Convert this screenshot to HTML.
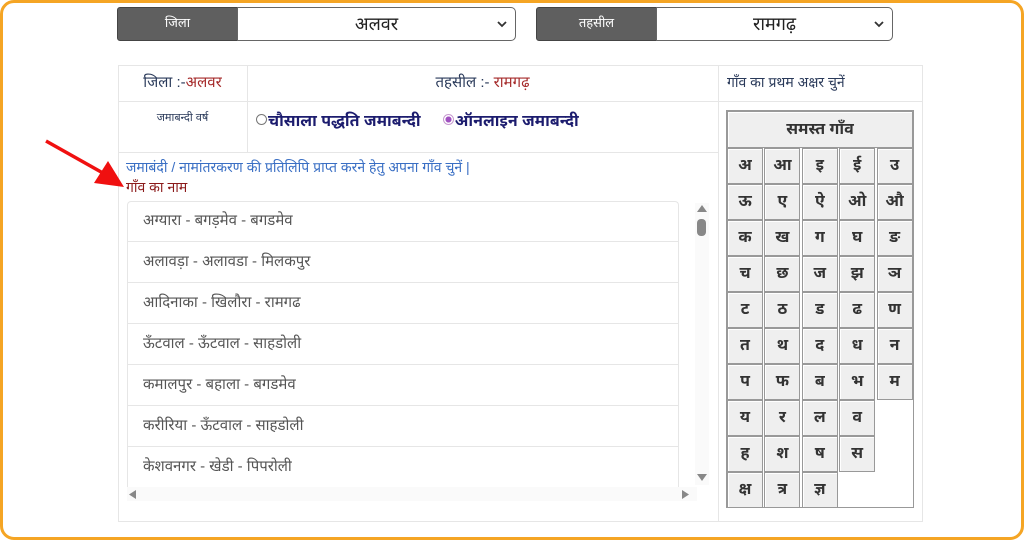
<!DOCTYPE html>
<html><head><meta charset="utf-8"><style>
*{margin:0;padding:0;box-sizing:border-box}
body{width:1024px;height:540px;background:#fff;font-family:"Liberation Sans","Noto Sans Devanagari","Lohit Devanagari",sans-serif;position:relative;overflow:hidden}
.frame{position:absolute;left:0;top:0;width:1024px;height:540px;border:3px solid #f5a524;border-radius:14px}
.abs{position:absolute}
.lab{background:#5f5f5f;color:#fff;font-size:13px;text-align:center;line-height:30px;border:1px solid #444;border-radius:3px 0 0 3px}
.sel{background:#fff;border:1px solid #666;border-radius:0 5px 5px 0;font-size:18px;text-align:center;line-height:32px;color:#222}
.sel svg{position:absolute;right:8px;top:13px}
.bd{border:1px solid #e6e6e6}
.c{color:#2a3a5a;font-size:14px;text-align:center}
.red{color:#a52a2a}
.item{position:absolute;left:127px;width:552px;height:41px;border-bottom:1px solid #e6e6e6;color:#555;font-size:15px;padding-left:16px;line-height:40px}
.cell{position:absolute;width:36px;height:36px;background:#efefef;border:1px solid #999;box-shadow:inset 1px 1px 0 #fff;font-size:16px;font-weight:bold;color:#333;text-align:center;line-height:34px}
.rad{display:inline-block;width:11px;height:11px;border-radius:50%;border:1px solid #777;vertical-align:1px;margin-right:1px}
</style></head><body>
<div class="frame"></div>
<div class="abs lab" style="left:117px;top:7px;width:121px;height:34px">जिला</div>
<div class="abs sel" style="left:237px;top:7px;width:279px;height:34px">अलवर<svg width="10" height="7"><path d="M1 1L5 5L9 1" fill="none" stroke="#333" stroke-width="1.8"/></svg></div>
<div class="abs lab" style="left:536px;top:7px;width:121px;height:34px">तहसील</div>
<div class="abs sel" style="left:656px;top:7px;width:237px;height:34px">रामगढ़<svg width="10" height="7"><path d="M1 1L5 5L9 1" fill="none" stroke="#333" stroke-width="1.8"/></svg></div>

<div class="abs bd" style="left:118px;top:65px;width:805px;height:457px"></div>
<div class="abs" style="left:118px;top:101px;width:600px;height:1px;background:#e6e6e6"></div>
<div class="abs" style="left:118px;top:152px;width:600px;height:1px;background:#e6e6e6"></div>
<div class="abs" style="left:718px;top:65px;width:1px;height:457px;background:#e6e6e6"></div>
<div class="abs" style="left:718px;top:101px;width:205px;height:1px;background:#e6e6e6"></div>
<div class="abs" style="left:247px;top:65px;width:1px;height:87px;background:#e6e6e6"></div>

<div class="abs c" style="left:118px;top:74px;width:129px;font-size:15px">जिला :-<span class="red">अलवर</span></div>
<div class="abs c" style="left:247px;top:74px;width:471px;font-size:15px">तहसील :- <span class="red">रामगढ़</span></div>
<div class="abs c" style="left:718px;top:74px;width:205px;font-size:14px;text-align:left;padding-left:9px">गाँव का प्रथम अक्षर चुनें</div>
<div class="abs c" style="left:118px;top:112px;width:129px;font-size:11px">जमाबन्दी वर्ष</div>
<div class="abs" style="left:256px;top:112px;font-size:16px;font-weight:bold;color:#1c1c6e"><span class="rad"></span>चौसाला पद्धति जमाबन्दी &nbsp;&nbsp;&nbsp;&nbsp;<span class="rad" style="border-color:#c79ad0;background:radial-gradient(#a050c0 45%,#fff 50%)"></span>ऑनलाइन जमाबन्दी</div>

<div class="abs" style="left:126px;top:159px;font-size:14px;color:#3a6fc4">जमाबंदी / नामांतरकरण की प्रतिलिपि प्राप्त करने हेतु अपना गाँव चुनें |</div>
<div class="abs" style="left:126px;top:179px;font-size:14px;color:#8b1a1a">गाँव का नाम</div>

<div class="abs" style="left:127px;top:201px;width:552px;height:290px;border:1px solid #e6e6e6;border-bottom:none;border-radius:4px 4px 0 0"></div>
<div class="item" style="top:201px">अग्यारा - बगड़मेव - बगडमेव</div>
<div class="item" style="top:242px">अलावड़ा - अलावडा - मिलकपुर</div>
<div class="item" style="top:283px">आदिनाका - खिलौरा - रामगढ</div>
<div class="item" style="top:324px">ऊँटवाल - ऊँटवाल - साहडोली</div>
<div class="item" style="top:365px">कमालपुर - बहाला - बगडमेव</div>
<div class="item" style="top:406px">करीरिया - ऊँटवाल - साहडोली</div>
<div class="item" style="top:447px;border-bottom:none">केशवनगर - खेडी - पिपरोली</div>
<div class="abs" style="left:127px;top:487px;width:570px;height:14px;background:#fafafa"></div>
<svg class="abs" style="left:129px;top:490px" width="8" height="9"><path d="M7 0L0 4.5L7 9Z" fill="#888"/></svg>
<svg class="abs" style="left:682px;top:490px" width="8" height="9"><path d="M0 0L7 4.5L0 9Z" fill="#888"/></svg>
<div class="abs" style="left:695px;top:203px;width:14px;height:282px;background:#fafafa"></div>
<svg class="abs" style="left:697px;top:205px" width="10" height="8"><path d="M0 7L5 0L10 7Z" fill="#888"/></svg>
<div class="abs" style="left:697px;top:219px;width:9px;height:17px;background:#888;border-radius:4px"></div>
<svg class="abs" style="left:697px;top:474px" width="10" height="8"><path d="M0 0L5 7L10 0Z" fill="#888"/></svg>

<div class="abs" style="left:726px;top:110px;width:188px;height:398px;border:1px solid #999;background:#fff"></div>
<div class="cell" style="left:727px;top:111px;width:186px;height:37px;line-height:35px">समस्त गाँव</div>
<div id="g"></div>
<script>
var rows=[["अ","आ","इ","ई","उ"],["ऊ","ए","ऐ","ओ","औ"],["क","ख","ग","घ","ङ"],["च","छ","ज","झ","ञ"],["ट","ठ","ड","ढ","ण"],["त","थ","द","ध","न"],["प","फ","ब","भ","म"],["य","र","ल","व"],["ह","श","ष","स"],["क्ष","त्र","ज्ञ"]];
var h="";rows.forEach(function(r,i){r.forEach(function(ch,j){h+='<div class="cell" style="left:'+(727+j*37.4)+'px;top:'+(148+i*36)+'px">'+ch+'</div>';});});
document.getElementById("g").innerHTML=h;
</script>

<svg class="abs" style="left:40px;top:135px" width="90" height="60"><line x1="6" y1="6" x2="70" y2="42" stroke="#f01010" stroke-width="3.5"/><polygon points="84,52 54,48 68,26" fill="#f01010"/></svg>
</body></html>
